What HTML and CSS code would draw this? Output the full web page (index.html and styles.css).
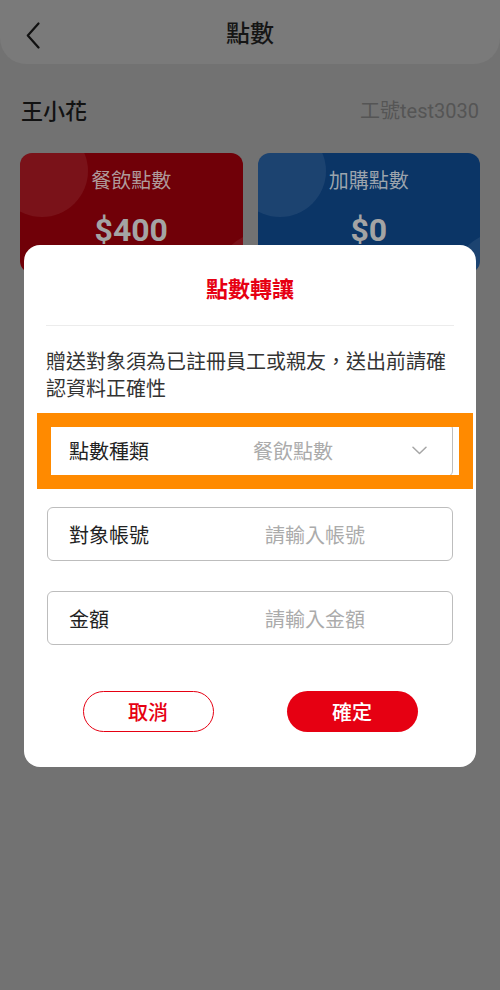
FILE: index.html
```html
<!DOCTYPE html>
<html lang="zh-Hant">
<head>
<meta charset="utf-8">
<title>點數</title>
<link rel="stylesheet" href="styles.css">
</head>
<body>
<div class="page">
  <header class="header">
    <button class="back" aria-label="返回">
      <svg width="14" height="27" viewBox="0 0 14 27"><polyline points="12.5,1.5 1.8,13.5 12.5,25.5" fill="none" stroke="#111" stroke-width="2.2" stroke-linecap="round" stroke-linejoin="round"/></svg>
    </button>
    <h1 class="title">點數</h1>
    <span></span>
  </header>

  <div class="user-row">
    <span class="name">王小花</span>
    <span class="emp">工號test3030</span>
  </div>

  <div class="cards">
    <div class="card card-red">
      <span class="bubble bubble-tl"></span>
      <span class="bubble bubble-br"></span>
      <div class="card-label">餐飲點數</div>
      <div class="card-amount">$400</div>
    </div>
    <div class="card card-blue">
      <span class="bubble bubble-tl"></span>
      <span class="bubble bubble-br"></span>
      <div class="card-label">加購點數</div>
      <div class="card-amount">$0</div>
    </div>
  </div>
</div>

<div class="modal">
  <h2 class="modal-title">點數轉讓</h2>
  <div class="divider"></div>
  <p class="desc">贈送對象須為已註冊員工或親友，送出前請確認資料正確性</p>

  <div class="fields">
    <div class="field field-select">
      <span class="field-label">點數種類</span>
      <span class="field-value">餐飲點數</span>
      <svg class="chevron" width="15" height="9" viewBox="0 0 15 9"><polyline points="1,1.2 7.5,7.5 14,1.2" fill="none" stroke="#a6a6a6" stroke-width="1.5" stroke-linecap="round" stroke-linejoin="round"/></svg>
      <span class="highlight"></span>
    </div>
    <div class="field">
      <span class="field-label field-label-wide">對象帳號</span>
      <span class="field-value">請輸入帳號</span>
    </div>
    <div class="field">
      <span class="field-label field-label-wide">金額</span>
      <span class="field-value">請輸入金額</span>
    </div>
  </div>

  <div class="actions">
    <button class="btn btn-cancel">取消</button>
    <button class="btn btn-ok">確定</button>
  </div>
</div>
</body>
</html>
```
FILE: styles.css
```css
* { box-sizing: border-box; }
html, body {
  margin: 0;
  padding: 0;
}
body {
  width: 500px;
  height: 990px;
  background: #727272;
  font-family: Roboto, "Noto Sans CJK TC", "Noto Sans", sans-serif;
  position: relative;
  overflow: hidden;
}

.header {
  height: 64px;
  background: #7a7a7a;
  border-radius: 0 0 26px 26px;
  display: grid;
  grid-template-columns: 80px 1fr 80px;
  align-items: center;
}
.back {
  background: none;
  border: 0;
  padding: 0 0 0 26px;
  margin-top: 6px;
  display: flex;
  align-items: center;
}
.title {
  margin: 4px 0 0;
  text-align: center;
  font-size: 24px;
  font-weight: 500;
  color: #151515;
  line-height: 32px;
}

.user-row {
  display: flex;
  justify-content: space-between;
  align-items: center;
  padding: 0 21px;
  margin-top: 30px;
  height: 30px;
}
.name {
  font-size: 22px;
  font-weight: 500;
  color: #121212;
}
.emp {
  font-size: 20px;
  color: #555;
}

.cards {
  display: grid;
  grid-template-columns: 1fr 1fr;
  gap: 15px;
  padding: 0 20px;
  margin-top: 29px;
}
.card {
  position: relative;
  height: 120px;
  border-radius: 12px;
  overflow: hidden;
  text-align: center;
  padding-top: 14px;
}
.card-red { background: #700008; }
.card-blue { background: #0b3566; }
.bubble {
  position: absolute;
  border-radius: 50%;
  background: rgba(255, 255, 255, 0.07);
}
.bubble-tl {
  width: 92px;
  height: 92px;
  left: -24px;
  top: -28px;
}
.bubble-br {
  width: 110px;
  height: 110px;
  right: -80px;
  top: 78px;
}
.card-label {
  position: relative;
  font-size: 20px;
  line-height: 28px;
  color: rgba(190, 190, 190, 0.82);
}
.card-amount {
  position: relative;
  margin-top: 15px;
  font-family: Roboto, sans-serif;
  font-weight: 700;
  font-size: 32px;
  line-height: 40px;
  color: #a4a4a4;
}

.modal {
  position: absolute;
  left: 24px;
  top: 245px;
  width: 452px;
  background: #fff;
  border-radius: 16px;
  padding: 30px 22px 35px;
}
.modal-title {
  margin: 0;
  text-align: center;
  font-size: 22px;
  line-height: 30px;
  font-weight: 700;
  color: #e60012;
}
.divider {
  height: 1px;
  background: #ececec;
  margin-top: 20px;
}
.desc {
  margin: 23px 0 0;
  font-size: 20px;
  line-height: 27px;
  color: #333;
}

.fields {
  margin-top: 20px;
  display: flex;
  flex-direction: column;
  gap: 30px;
  padding: 0 1px;
}
.field {
  position: relative;
  height: 54px;
  border: 1.5px solid #bdbdbd;
  border-radius: 6px;
  display: flex;
  align-items: center;
  padding-left: 21px;
  font-size: 20px;
}
.field-label {
  width: 184px;
  color: #222;
}
.field-label-wide { width: 196px; }
.field-value { color: #ababab; }
.chevron {
  margin-left: auto;
  margin-right: 25px;
}
.highlight {
  position: absolute;
  left: -11.5px;
  top: -11.5px;
  width: 436px;
  height: 76px;
  border: 14px solid #ff8a00;
  pointer-events: none;
}

.actions {
  margin-top: 46px;
  display: flex;
  justify-content: center;
  gap: 73px;
}
.btn {
  width: 131px;
  height: 41px;
  border-radius: 21px;
  font-family: "Noto Sans CJK TC", sans-serif;
  font-size: 20px;
  font-weight: 500;
  padding: 0;
}
.btn-cancel {
  background: #fff;
  border: 1.5px solid #e60012;
  color: #e60012;
}
.btn-ok {
  background: #e60012;
  border: 0;
  color: #fff;
}
```
